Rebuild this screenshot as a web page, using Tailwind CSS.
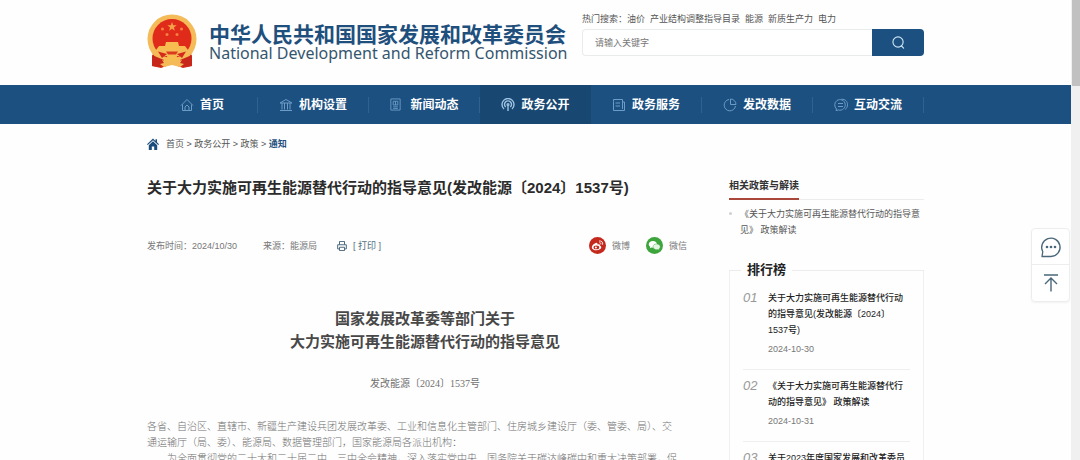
<!DOCTYPE html>
<html lang="zh-CN">
<head>
    <meta charset="UTF-8">
    <meta name="viewport" content="width=device-width, initial-scale=1.0">
    <title>关于大力实施可再生能源替代行动的指导意见</title>
    <script src="https://cdn.jsdelivr.net/npm/@tailwindcss/browser@4"></script>
</head>
<body class="flex h-screen overflow-hidden bg-[#fefefe] font-['Liberation_Sans','Noto_Sans_CJK_SC',sans-serif] text-[9px] leading-4 text-[#555]">
    <div class="flex-1 min-w-0">
        <!-- 页头：徽标和搜索 -->
        <header class="max-w-[777px] h-[85px] mx-auto flex items-start justify-between">
            <a href="#" class="flex items-center pt-[14px] gap-3">
                <svg class="w-[50px] h-[54px]" viewBox="0 0 50 54">
                    <path d="M6 36 L5 52 L14 54 L25 50 L36 54 L45 52 L44 36z" fill="#cf2a1c"/>
                    <circle cx="25" cy="25" r="24.500" fill="#f4bb58"/>
                    <circle cx="25" cy="24.500" r="19.500" fill="#e02b1b"/>
                    <path d="M25 8l1.200 3.300h3.500l-2.800 2.100 1 3.400-2.900-2-2.900 2 1-3.400-2.800-2.100h3.500z" fill="#f6a04a"/>
                    <g fill="#f4813f">
                        <circle cx="15.500" cy="15" r="1.500"/><circle cx="34.500" cy="15" r="1.500"/>
                        <circle cx="20" cy="20.500" r="1.500"/><circle cx="30" cy="20.500" r="1.500"/>
                    </g>
                    <path d="M19 28h12l1 4h6l3 4H9l3-4h6z" fill="#f7bd50"/>
                    <path d="M7 36h36l-4 6H11z" fill="#f4bb58"/>
                    <path d="M11 37.500l9 2.500-5 4zM39 37.500L30 40l5 4z" fill="#d42a1c"/>
                    <circle cx="25" cy="43" r="5" fill="#f7bd50"/>
                    <path d="M19 37.500h12l-2 3h-8z" fill="#dc3a1f"/>
                    <path d="M5 41l12 5-3 7-9-1zM45 41l-12 5 3 7 9-1z" fill="#c9261b"/>
                    <path d="M13 50l4-1-2-3 10 3 10-3-2 3 4 1-4 3-8-2-8 2z" fill="#f4bb58"/>
                </svg>
                <span class="block">
                    <span class="block text-[21px] leading-6 font-bold text-[#1f4f7d]">中华人民共和国国家发展和改革委员会</span>
                    <span class="block font-['Noto_Sans',sans-serif] text-[16px] leading-3 text-[#35566f]">National Development and Reform Commission</span>
                </span>
            </a>
            <div class="w-[342px] pt-[11px]">
                <p class="flex gap-[5px]">
                    <span>热门搜索：<a href="#">油价</a></span>
                    <a href="#">产业结构调整指导目录</a>
                    <a href="#">能源</a>
                    <a href="#">新质生产力</a>
                    <a href="#">电力</a>
                </p>
                <form class="flex h-[27px] mt-[2px]">
                    <input type="text" aria-label="搜索" placeholder="请输入关键字" class="flex-1 min-w-0 px-3 border border-r-0 border-[#e9ecec] rounded-l-sm bg-white placeholder:text-[#777]">
                    <button type="button" aria-label="搜索" class="w-[52px] flex items-center justify-center rounded-r-sm bg-[#1b5080] text-[#cfe6f6]">
                        <svg class="size-[13px]" viewBox="0 0 14 14" fill="none" stroke="currentColor" stroke-width="1.200" stroke-linecap="round">
                            <circle cx="6.500" cy="6.500" r="5.500"/><path d="M10 10.500l2.500 2.500"/>
                        </svg>
                    </button>
                </form>
            </div>
        </header>

        <!-- 主导航 -->
        <nav class="bg-[#1b5080]">
            <ul class="max-w-[777px] mx-auto grid grid-cols-7 h-[39px] text-[12px] font-bold text-white">
                <li class="flex items-center">
                    <a href="#" class="flex-1 h-full flex items-center justify-center gap-[6px]">
                        <svg class="size-[14px] text-[#6d9cc6]" viewBox="0 0 14 14" fill="none" stroke="currentColor"><path d="M1 7.500L7 1.500l6 6M2.500 6.500v6h9v-6M5 12.500V9l2-2 2 2v3.500"/></svg>
                        首页
                    </a>
                    <span class="w-px h-4 bg-[#30628f]"></span>
                </li>
                <li class="flex items-center">
                    <a href="#" class="flex-1 h-full flex items-center justify-center gap-[6px]">
                        <svg class="size-[14px] text-[#6d9cc6]" viewBox="0 0 14 14" fill="none" stroke="currentColor"><path d="M1 5h12L7 1.500zM3 5v6.500M5.500 5v6.500M8.500 5v6.500M11 5v6.500M1 12.500h12"/></svg>
                        机构设置
                    </a>
                    <span class="w-px h-4 bg-[#30628f]"></span>
                </li>
                <li class="flex items-center">
                    <a href="#" class="flex-1 h-full flex items-center justify-center gap-[8px]">
                        <svg class="size-[13px] text-[#6d9cc6]" viewBox="0 0 14 14" fill="none" stroke="currentColor"><path d="M2 1h10v12H2zM4.500 3.500h5v4h-5zM7 3.500v4M4.500 9.500h5M4.500 11.200h5"/></svg>
                        新闻动态
                    </a>
                    <span class="w-px h-4 bg-[#30628f]"></span>
                </li>
                <li class="flex items-center bg-[#184772]">
                    <a href="#" class="flex-1 h-full flex items-center justify-center gap-[6px]">
                        <svg class="size-[14px] text-[#9fc3e2]" viewBox="0 0 14 14" fill="none" stroke="currentColor" stroke-width="1.400"><path d="M3 11a6 6 0 1 1 8 0M4.700 9a3.500 3.500 0 1 1 4.600 0"/><circle cx="7" cy="6.500" r=".9"/><path d="M7 7v6"/></svg>
                        政务公开
                    </a>
                </li>
                <li class="flex items-center">
                    <a href="#" class="flex-1 h-full flex items-center justify-center gap-[6px]">
                        <svg class="size-[14px] text-[#6d9cc6]" viewBox="0 0 14 14" fill="none" stroke="currentColor"><path d="M1.500 3.500v9h11V4h-2M1.500 3.500v-2h9v9.500M3.500 5h4.500M3.500 8h4.500"/></svg>
                        政务服务
                    </a>
                    <span class="w-px h-4 bg-[#30628f]"></span>
                </li>
                <li class="flex items-center">
                    <a href="#" class="flex-1 h-full flex items-center justify-center gap-[6px]">
                        <svg class="size-[14px] text-[#6d9cc6]" viewBox="0 0 14 14" fill="none" stroke="currentColor"><path d="M6 1.500a5.700 5.700 0 1 0 6.500 6.500M7.500 1v5.500H13A5.500 5.500 0 0 0 7.500 1z"/></svg>
                        发改数据
                    </a>
                    <span class="w-px h-4 bg-[#30628f]"></span>
                </li>
                <li class="flex items-center">
                    <a href="#" class="flex-1 h-full flex items-center justify-center gap-[6px]">
                        <svg class="size-[14px] text-[#6d9cc6]" viewBox="0 0 14 14" fill="none" stroke="currentColor"><path d="M3 2.500a5.500 5.500 0 0 0-.5 8.500L2 12.500l2.500-.5A5.300 5.300 0 1 0 3 2.500M7.500 1.200c4 0 6 2.300 6 5.500 0 2.300-1 3.800-2.300 4.800M4 5.500h5M4 8.500h5"/></svg>
                        互动交流
                    </a>
                    <span class="w-px h-4 bg-[#30628f]"></span>
                </li>
            </ul>
        </nav>

        <div class="max-w-[777px] mx-auto">
            <!-- 面包屑 -->
            <div class="flex items-center gap-[7px] pt-3">
                <svg class="size-[12px]" viewBox="0 0 12 12" fill="#1b4d7c"><path d="M6 .5L0 6.200l.8.900L6 2.200l5.200 4.900.8-.9-2-1.900V1.200H8.500v1.700zM6 3.300L1.800 7.200V12h3V8.500h2.400V12h3V7.200z"/></svg>
                <p><a href="#">首页</a> &gt; <a href="#">政务公开</a> &gt; <a href="#">政策</a> &gt; <a href="#" class="font-bold text-[#1f4f7d]">通知</a></p>
            </div>

            <div class="flex gap-[26px]">
                <!-- 正文 -->
                <main class="flex-1 min-w-0 pt-6">
                    <h1 class="text-[15px] leading-6 font-bold text-[#2b2b2b]">关于大力实施可再生能源替代行动的指导意见(发改能源〔2024〕1537号)</h1>
                    <div class="flex items-center justify-between pt-[37px] pr-4 text-[#777]">
                        <div class="flex items-center">
                            <span>发布时间：2024/10/30</span>
                            <span class="ml-[26px]">来源：能源局</span>
                            <button type="button" class="ml-5 flex items-center gap-[6px] text-[#4d6b80]">
                                <svg class="size-[10px]" viewBox="0 0 12 12" fill="none" stroke="currentColor" stroke-width="1.200"><path d="M3 4.500v-4h6v4M3 9.500H.8v-5h10.400v5H9M3 7.500h6v4H3z"/></svg>
                                [ 打印 ]
                            </button>
                        </div>
                        <div class="flex items-center gap-[16px]">
                            <a href="#" class="flex items-center gap-[6px]">
                                <svg class="size-[17px]" viewBox="0 0 18 18">
                                    <circle cx="9" cy="9" r="9" fill="#c5281c"/>
                                    <path d="M8 6C5.500 6.500 3 9 3 11c0 1.800 2.300 3 5 3s5-1.400 5-3.100c0-1-.7-1.600-1.600-1.900.3-1-.2-1.900-2.400-1 0-1 0-2.100-1-2z" fill="#fff"/>
                                    <ellipse cx="7.800" cy="11" rx="3" ry="2" fill="#c5281c"/><circle cx="7.300" cy="11.200" r="1.100" fill="#fff"/>
                                    <path d="M11 4.200c2.500-.4 4 1.300 3.500 3.600M11.300 6c1-.1 1.500.6 1.300 1.500" fill="none" stroke="#fff" stroke-width=".9" stroke-linecap="round"/>
                                </svg>
                                微博
                            </a>
                            <a href="#" class="flex items-center gap-[6px]">
                                <svg class="size-[17px]" viewBox="0 0 18 18">
                                    <circle cx="9" cy="9" r="9" fill="#3ea53c"/>
                                    <path d="M7.300 4.200c-2.500 0-4.400 1.600-4.400 3.500 0 1.100.6 2 1.600 2.700L4.200 12l1.600-.9 1.500.2c2.500 0 4.400-1.600 4.400-3.500S9.800 4.200 7.300 4.200z" fill="#fff"/>
                                    <path d="M11.300 7.300c-2.200 0-3.900 1.400-3.900 3.100s1.700 3.100 3.900 3.100l1.300-.2 1.400.8-.3-1.400c.9-.6 1.400-1.400 1.400-2.300 0-1.700-1.700-3.100-3.800-3.100z" fill="#e4f5e2" stroke="#3ea53c" stroke-width=".5"/>
                                </svg>
                                微信
                            </a>
                        </div>
                    </div>

                    <article class="pt-[53px] text-[10px] text-[#707070]">
                        <h2 class="text-center text-[15px] leading-[23px] font-bold text-[#484848]">国家发展改革委等部门关于<br>大力实施可再生能源替代行动的指导意见</h2>
                        <p class="pt-[23px] text-center font-['Liberation_Serif','Noto_Sans_CJK_SC',serif]">发改能源〔2024〕1537号</p>
                        <div class="pt-[27px] font-light whitespace-nowrap">
                            <p>各省、自治区、直辖市、新疆生产建设兵团发展改革委、工业和信息化主管部门、住房城乡建设厅（委、管委、局）、交<br>通运输厅（局、委）、能源局、数据管理部门，国家能源局各派出机构：</p>
                            <p class="indent-[2em]">为全面贯彻党的二十大和二十届二中、三中全会精神，深入落实党中央、国务院关于碳达峰碳中和重大决策部署，促</p>
                        </div>
                    </article>
                </main>

                <!-- 侧栏 -->
                <aside class="w-[195px] pt-[22px]">
                    <h2 class="flex border-b border-[#ececec] text-[10px] leading-6 font-bold text-[#333]">
                        <span class="-mb-px border-b-2 border-[#a8473a]">相关政策与解读</span>
                    </h2>
                    <ul class="pt-[6px]">
                        <li class="flex gap-2">
                            <span class="w-[3px] h-[3px] mt-[6px] shrink-0 rounded-full bg-[#d0d0d0]"></span>
                            <a href="#">《关于大力实施可再生能源替代行动的指导意见》 政策解读</a>
                        </li>
                    </ul>

                    <section class="mt-5">
                        <div class="flex items-center">
                            <span class="w-3 h-px bg-[#ececec]"></span>
                            <h2 class="px-[6px] text-[13px] leading-6 font-bold text-[#222]">排行榜</h2>
                            <span class="flex-1 h-px bg-[#ececec]"></span>
                        </div>
                        <ol class="-mt-3 pt-3 px-[13px] border-x border-[#f0f0f0]">
                            <li class="flex gap-3 pt-2 pb-3 border-b border-[#efefef]">
                                <span class="w-[13px] text-[13px] italic text-[#999]">01</span>
                                <div class="flex-1">
                                    <a href="#" class="block font-medium text-[#222]">关于大力实施可再生能源替代行动的指导意见(发改能源〔2024〕1537号)</a>
                                    <time class="block mt-[3px] text-[#777]">2024-10-30</time>
                                </div>
                            </li>
                            <li class="flex gap-3 pt-2 pb-3 border-b border-[#efefef]">
                                <span class="w-[13px] text-[13px] italic text-[#999]">02</span>
                                <div class="flex-1">
                                    <a href="#" class="block font-medium text-[#222]">《关于大力实施可再生能源替代行动的指导意见》 政策解读</a>
                                    <time class="block mt-[3px] text-[#777]">2024-10-31</time>
                                </div>
                            </li>
                            <li class="flex gap-3 pt-2 pb-3">
                                <span class="w-[13px] text-[13px] italic text-[#999]">03</span>
                                <div class="flex-1">
                                    <a href="#" class="block font-medium text-[#222]">关于2023年度国家发展和改革委员</a>
                                </div>
                            </li>
                        </ol>
                    </section>
                </aside>
            </div>
        </div>
    </div>

    <!-- 右侧滚动条 -->
    <div class="w-[9px] shrink-0 bg-[#f0f0f0] pl-px">
        <div class="h-[86px] bg-[#c1c1c1]"></div>
    </div>

    <!-- 悬浮工具 -->
    <div class="fixed right-[10px] top-[228px] w-[39px] rounded-sm border border-[#eceeee] bg-white shadow-xs text-[#48677a]">
        <button type="button" aria-label="留言" class="w-full h-9 flex items-center justify-center border-b border-[#eceeee]">
            <svg class="size-[22px]" viewBox="0 0 22 22" fill="none" stroke="currentColor" stroke-width="1.300" stroke-linejoin="round"><path d="M2 20.500l.8-4.800A9.200 9.200 0 1 1 11 20.500z"/><g fill="currentColor" stroke="none"><circle cx="7" cy="11" r="1.300"/><circle cx="11" cy="11" r="1.300"/><circle cx="15" cy="11" r="1.300"/></g></svg>
        </button>
        <button type="button" aria-label="返回顶部" class="w-full h-9 flex items-center justify-center">
            <svg class="size-[20px]" viewBox="0 0 20 20" fill="none" stroke="currentColor" stroke-width="1.400"><path d="M3 2h14M10 18.500V5M4 11l6-6 6 6"/></svg>
        </button>
    </div>
</body>
</html>
